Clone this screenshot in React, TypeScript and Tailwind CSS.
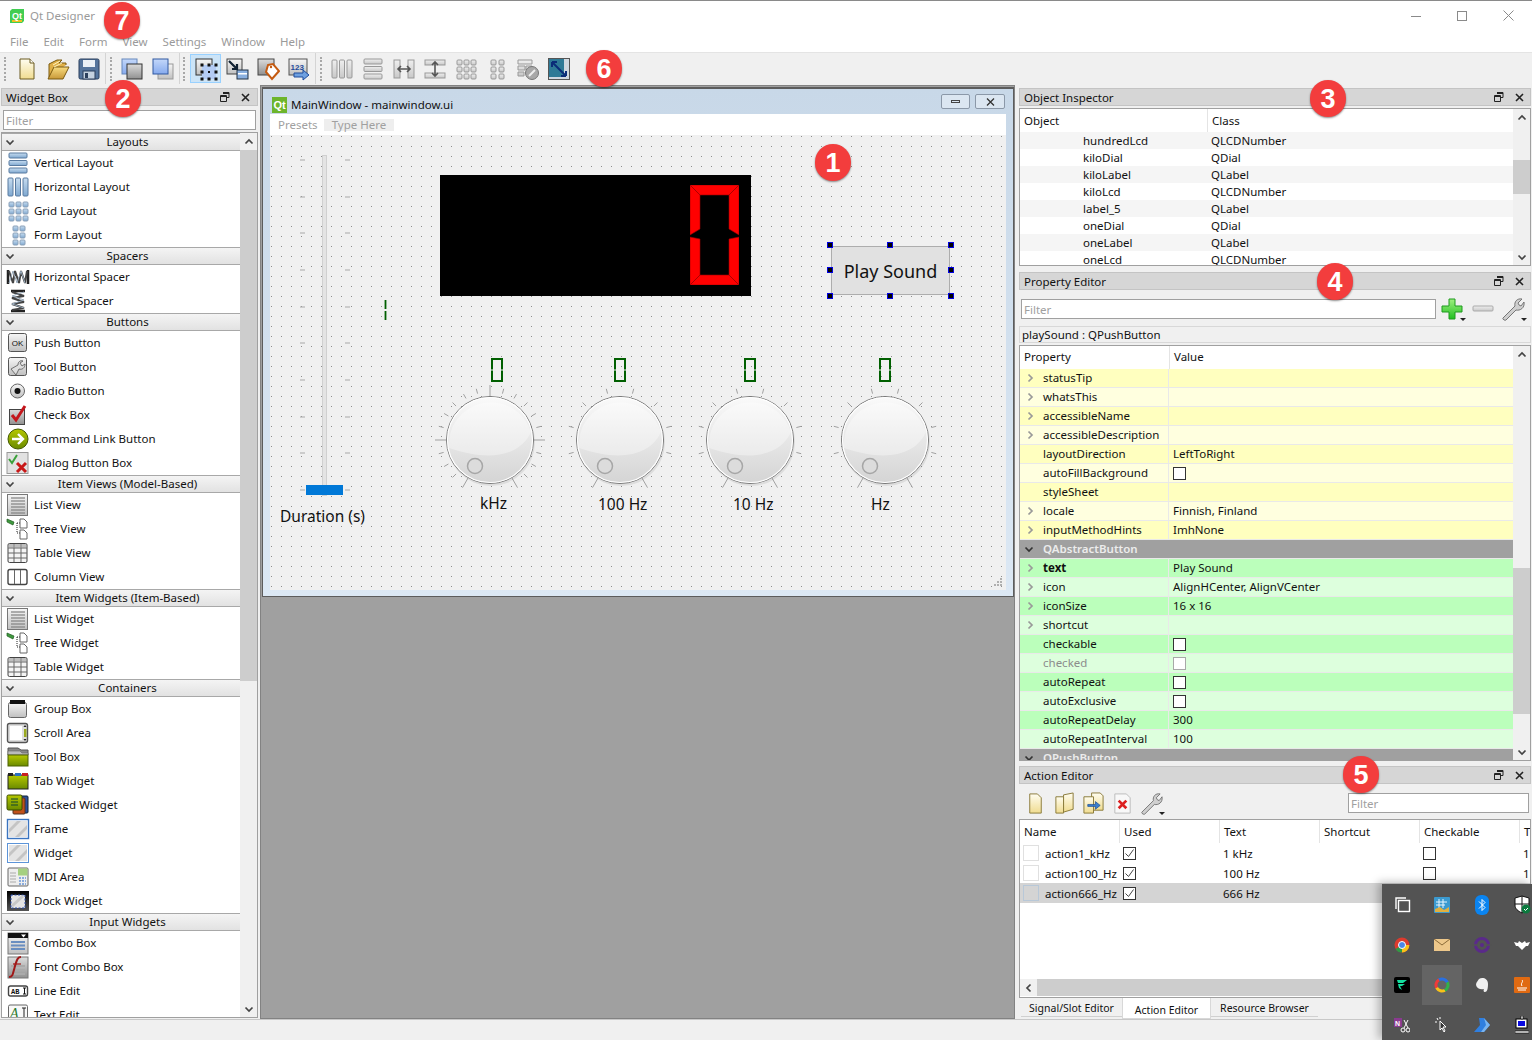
import React from "react";

type Ch = { children: React.ReactNode };

const Ico = ({ children, size = 24 }: Ch & { size?: number }) => (
  <svg width={size} height={size} viewBox="0 0 24 24" className="shrink-0">
    {children}
  </svg>
);

const bars3 = (horizontal: boolean, fill: string, stroke: string) =>
  [2, 9.5, 17].map((p) =>
    horizontal ? (
      <rect key={p} x={3} y={p} width={18} height={5} rx={1} fill={fill} stroke={stroke} />
    ) : (
      <rect key={p} x={p} y={3} width={5} height={18} rx={1} fill={fill} stroke={stroke} />
    )
  );

const cells = (xs: number[], ys: number[], fill: string, stroke: string) =>
  xs.flatMap((x) =>
    ys.map((y) => <rect key={`${x}-${y}`} x={x} y={y} width={5} height={5} rx={1} fill={fill} stroke={stroke} />)
  );

const hatch = (
  <>
    <rect x={3} y={4} width={18} height={16} fill="#e4e4e4" />
    <path d="M3 12l8-8h4L3 16zM9 20L21 8v4l-8 8z" fill="#c4c4c4" />
  </>
);

const treeIcon = (
  <>
    <path d="M1 2l7 3-1 3-6-3z" fill="#3f9a3f" stroke="#1f5a1f" strokeWidth=".7" />
    <path d="M11 6h3M11 6v10h3" stroke="#222" strokeWidth="1" strokeDasharray="1 1" fill="none" />
    <path d="M14 2h4l3 3v6h-7zM14 13h4l3 3v6h-7z" fill="#fff" stroke="#666" />
  </>
);

const listIcon = (
  <>
    <rect x={1.5} y={1.5} width={20} height={21} fill="url(#gGrey)" stroke="#777" />
    {[5, 8, 11, 14, 17, 20].map((y) => (
      <path key={y} d={`M5 ${y}h14`} stroke="#888" strokeWidth="1.3" />
    ))}
  </>
);

const tableIcon = (
  <>
    <rect x={2} y={2.5} width={19} height={19} rx={1.5} fill="#f4f4f4" stroke="#444" />
    <path d="M2 7h19M2 12h19M2 17h19M8 3v18M15 3v18" stroke="#666" />
    <rect x={2.5} y={3} width={18} height={4} fill="#999" opacity=".6" />
  </>
);

const wrench = (
  <path d="M2 21L14 9c-1-4 2-8 7-7l-4 4 1 2 2 1 3-4c1 6-4 9-8 8L5 23c-1 1-4-1-3-2z" fill="#cfcfcf" stroke="#6a6a6a" strokeWidth=".9" />
);

const page = <path d="M6 2h8l4 4v16H6z" fill="url(#gCream)" stroke="#8a7a3a" />;

const icons: Record<string, React.ReactNode> = {
  vlayout: bars3(true, "url(#gBlue)", "#587aa0"),
  hlayout: bars3(false, "url(#gBlue)", "#587aa0"),
  grid: cells([3, 10, 17], [3, 10, 17], "url(#gBlue)", "#8aa0b8"),
  form: cells([7, 14], [3, 10, 17], "url(#gBlue)", "#8aa0b8"),
  hspacer: (
    <>
      <path d="M2 5v14M22 5v14" stroke="#222" strokeWidth="2.5" />
      <path d="M3 6l4 12 2-12 4 12 2-12 4 12 2-12" stroke="#444" strokeWidth="2" fill="none" />
      <path d="M3 18l4-12 4 12 4-12 4 12" stroke="#9ab" strokeWidth="1" fill="none" />
    </>
  ),
  vspacer: (
    <>
      <path d="M5 2h14M5 22h14" stroke="#222" strokeWidth="2.5" />
      <path d="M6 3l12 4-12 2 12 4-12 2 12 4-12 2" stroke="#444" strokeWidth="2" fill="none" />
      <path d="M18 3L6 7l12 4-12 4 12 4" stroke="#9ab" strokeWidth="1" fill="none" />
    </>
  ),
  ok: (
    <>
      <rect x={2.5} y={2.5} width={18} height={18} rx={2} fill="url(#gGrey)" stroke="#555" />
      <text x={11.5} y={14.5} fontSize="8" textAnchor="middle" fontFamily="Liberation Sans" fill="#111">
        OK
      </text>
    </>
  ),
  tool: (
    <>
      <rect x={2.5} y={2.5} width={18} height={18} rx={2} fill="url(#gGrey)" stroke="#555" />
      <path d="M5 14l7-4c0-3 2-5 5-4l-3 2 2 3 3-2c0 4-3 6-6 5l-3 6z" fill="#ddd" stroke="#555" strokeWidth=".8" />
    </>
  ),
  radio: (
    <>
      <circle cx={11.5} cy={12} r={7} fill="url(#gGrey)" stroke="#666" />
      <circle cx={11.5} cy={12} r={3} fill="#111" />
    </>
  ),
  check: (
    <>
      <rect x={3.5} y={6.5} width={15} height={15} fill="url(#gDark)" stroke="#444" />
      <path d="M6 12l4 5 9-14" stroke="#c4161c" strokeWidth="3" fill="none" />
    </>
  ),
  cmdlink: (
    <>
      <circle cx={12} cy={12} r={10} fill="url(#gOlive)" stroke="#445a00" />
      <path d="M6 12h10M12 7l5 5-5 5" stroke="#fff" strokeWidth="2.4" fill="none" />
    </>
  ),
  dialogbox: (
    <>
      <rect x={1} y={1.5} width={21} height={21} fill="#e2e2e2" stroke="#999" />
      <path d="M3 8l3 4 5-8" stroke="#3aa03a" strokeWidth="2" fill="none" />
      <path d="M11 12l9 9M20 12l-9 9" stroke="#c81818" strokeWidth="3" />
    </>
  ),
  list: listIcon,
  tree: treeIcon,
  table: tableIcon,
  column: (
    <>
      <rect x={2} y={4.5} width={19} height={15} rx={2} fill="#fff" stroke="#444" strokeWidth="1.4" />
      <path d="M8.5 5v14M14.5 5v14" stroke="#666" />
    </>
  ),
  group: (
    <>
      <rect x={2.5} y={5.5} width={18} height={15} rx={2} fill="url(#gGrey)" stroke="#666" />
      <rect x={4} y={3} width={15} height={4} fill="#111" />
    </>
  ),
  scroll: (
    <>
      <rect x={1.5} y={2.5} width={20} height={19} rx={2} fill="#ddd" stroke="#555" strokeWidth="1.4" />
      <rect x={4} y={5} width={12} height={14} fill="#fff" />
      <rect x={18} y={8} width={2.5} height={8} fill="#9aaa20" />
      <path d="M19 4l-1.5 2h3zM19 20l-1.5-2h3z" fill="#222" />
    </>
  ),
  toolbox: (
    <>
      <path d="M2 3h10l3 2h7v5H2z" fill="#888" stroke="#555" />
      <path d="M2 6h12l2 2h6v2H2z" fill="#bbb" stroke="#666" strokeWidth=".6" />
      <rect x={2} y={10} width={20} height={11} fill="url(#gOlive)" stroke="#4c6000" />
    </>
  ),
  tab: (
    <>
      <rect x={2} y={6} width={20} height={14} fill="url(#gOlive)" stroke="#222" />
      <rect x={2} y={4} width={5} height={3} fill="#222" />
      <rect x={9} y={4} width={6} height={3} fill="#2a6fc0" />
      <rect x={16} y={4} width={6} height={3} fill="#c82020" />
    </>
  ),
  stacked: (
    <>
      <rect x={12} y={3} width={10} height={17} rx={1} fill="#2a50a0" stroke="#123" />
      <rect x={7} y={5} width={12} height={16} rx={1} fill="#c0501a" stroke="#532" />
      <rect x={1} y={2} width={15} height={15} rx={1.5} fill="url(#gOlive)" stroke="#3a4a00" />
      <path d="M5 6h7M5 9h7M5 12h7" stroke="#143" strokeWidth="1.2" />
    </>
  ),
  frame: (
    <>
      {hatch}
      <rect x={1.5} y={2.5} width={21} height={19} fill="none" stroke="#3a74c0" strokeWidth="1.4" />
    </>
  ),
  widget: (
    <>
      {hatch}
      <rect x={1.5} y={2.5} width={21} height={19} fill="none" stroke="#5c94d8" />
    </>
  ),
  mdi: (
    <>
      <rect x={2} y={3} width={20} height={18} rx={1} fill="#eee" stroke="#666" />
      <rect x={12} y={3.5} width={9.5} height={7} fill="#a5d080" />
      <path d="M4 8h6M4 11h6M4 14h6M4 17h6" stroke="#aaa" />
      <path d="M13 13h7M13 16h7M13 19h7" stroke="#6a96d8" strokeWidth="1.5" strokeDasharray="2 1" />
    </>
  ),
  dock: (
    <>
      <rect x={1} y={2} width={22} height={20} fill="url(#gBlack)" />
      <rect x={5} y={6} width={14} height={13} fill="#e4e4e4" stroke="#2a4fb0" strokeDasharray="2 1.5" />
      <path d="M6 17L17 7" stroke="#c8c8c8" strokeWidth="3" />
    </>
  ),
  combo: (
    <>
      <rect x={2} y={2} width={20} height={21} fill="url(#gGrey)" stroke="#777" />
      <rect x={2} y={2} width={20} height={5} fill="#111" />
      <path d="M15 3.5h5L17.5 6.5z" fill="#fff" />
      <path d="M5 11h14M5 14.5h14M5 18h14" stroke="#6a8ec0" strokeWidth="2.2" />
    </>
  ),
  fontcombo: (
    <>
      <rect x={2} y={2} width={20} height={21} fill="url(#gDark)" stroke="#777" />
      <path d="M5 11h14M5 15h14M5 19h14" stroke="#aaa" strokeWidth="2" />
      <path d="M3 22c4 0 4-4 6-11s3-9 6-9" stroke="#a01818" strokeWidth="2" fill="none" />
      <path d="M7 9h8" stroke="#a01818" strokeWidth="1.2" />
    </>
  ),
  lineedit: (
    <>
      <rect x={2.5} y={7} width={19} height={10} rx={2} fill="#fff" stroke="#444" strokeWidth="1.4" />
      <text x={5} y={14.5} fontSize="7" fontFamily="Liberation Mono" fontWeight="700" fill="#111">
        AB
      </text>
      <path d="M17 9h3M17 15h3M18.5 9v6" stroke="#111" />
    </>
  ),
  textedit: (
    <>
      <rect x={2.5} y={2} width={19} height={21} rx={1.5} fill="#f8f8f8" stroke="#666" />
      <text x={4} y={15} fontSize="14" fontStyle="italic" fontFamily="Liberation Serif" fill="#2d7a2d">
        A
      </text>
      <path d="M16 5h4M16 19h4M18 5v14" stroke="#222" />
    </>
  ),
  newDoc: (
    <>
      <path d="M5 2h10l4 4v16H5z" fill="url(#gCream)" stroke="#6b5a20" />
      <path d="M15 2v4h4" fill="#fff" stroke="#6b5a20" />
    </>
  ),
  open: (
    <>
      <path d="M3 20V7l8-4h5l-3 3h7v2" fill="#e0b048" stroke="#7a5a10" />
      <path d="M2 22l6-12h15l-6 12z" fill="url(#gFolder)" stroke="#7a5a10" />
      <path d="M7 8l7-4M8 10l8-4" stroke="#fff3c0" />
    </>
  ),
  save: (
    <>
      <rect x={2} y={2} width={20} height={20} rx={1.5} fill="#54749c" stroke="#2b3f5c" />
      <rect x={6} y={3} width={12} height={7} fill="#eaf0f6" />
      <rect x={6} y={14} width={12} height={8} fill="#c5d2e0" stroke="#2b3f5c" />
      <rect x={8} y={16} width={3} height={5} fill="#2b3f5c" />
    </>
  ),
  toBack: (
    <>
      <rect x={2} y={2} width={15} height={15} fill="url(#gBlue2)" stroke="#6688bb" />
      <rect x={7} y={7} width={15} height={15} fill="url(#gDark)" stroke="#333" />
    </>
  ),
  toFront: (
    <>
      <rect x={7} y={7} width={15} height={15} fill="url(#gGrey)" stroke="#999" />
      <rect x={2} y={2} width={15} height={15} fill="url(#gBlue2)" stroke="#3058a0" />
    </>
  ),
  editWidgets: (
    <>
      <rect x={2} y={2} width={16} height={16} fill="url(#gGrey)" stroke="#333" />
      <rect x={8} y={8} width={14} height={14} fill="#b4ccf4" />
      {[[8, 8], [15, 8], [22, 8], [8, 15], [22, 15], [8, 22], [15, 22], [22, 22]].map(([x, y]) => (
        <rect key={`${x}${y}`} x={x - 1.5} y={y - 1.5} width={3} height={3} fill="#111" />
      ))}
      <rect x={14} y={14} width={2} height={2} fill="#111" />
    </>
  ),
  signals: (
    <>
      <rect x={2} y={2} width={15} height={15} fill="url(#gGrey)" stroke="#444" />
      <rect x={12} y={13} width={11} height={9} fill="#8ab0e0" stroke="#234" />
      <rect x={13} y={16} width={9} height={1.5} fill="#fff" />
      <path d="M4 4l7 7M7 12h5V7" stroke="#123" strokeWidth="2.2" fill="none" />
    </>
  ),
  buddy: (
    <>
      <rect x={2} y={2} width={16} height={16} fill="url(#gDark)" stroke="#444" />
      <path d="M12 8l5-1 6 7-7 8-6-7z" fill="#fff" stroke="#c45a10" strokeWidth="2" />
      <circle cx={15} cy={10} r={1.2} fill="#c45a10" />
    </>
  ),
  taborder: (
    <>
      <rect x={2} y={2} width={18} height={16} fill="url(#gGrey)" stroke="#555" />
      <text x={3.5} y={13} fontSize="8" fontFamily="Liberation Sans" fontWeight="700" fill="#1f4c9c">
        123
      </text>
      <path d="M7 16h9v-3l6 5-6 5v-3H7z" fill="#6ea0e0" stroke="#1f4c9c" />
    </>
  ),
  gH: bars3(false, "url(#gLight)", "#999"),
  gV: bars3(true, "url(#gLight)", "#999"),
  gSplitH: (
    <>
      <rect x={2} y={3} width={6} height={18} fill="url(#gLight)" stroke="#999" />
      <rect x={16} y={3} width={6} height={18} fill="url(#gLight)" stroke="#999" />
      <path d="M6 12h12M9 9l-3 3 3 3M15 9l3 3-3 3" stroke="#555" strokeWidth="1.6" fill="none" />
    </>
  ),
  gSplitV: (
    <>
      <rect x={2} y={3} width={20} height={5} fill="url(#gLight)" stroke="#999" />
      <rect x={2} y={16} width={20} height={5} fill="url(#gLight)" stroke="#999" />
      <path d="M12 5v14M9 8l3-3 3 3M9 16l3 3 3-3" stroke="#555" strokeWidth="1.6" fill="none" />
    </>
  ),
  gGrid: cells([3, 10, 17], [3, 10, 17], "url(#gLight)", "#999"),
  gForm: cells([6, 14], [3, 10, 17], "url(#gLight)", "#999"),
  gBreak: (
    <>
      <path d="M2 3h14v4H2zM2 9h7v4H2zM10 9h6v4h-6zM2 15h6v4H2z" fill="url(#gLight)" stroke="#999" />
      <circle cx={16} cy={16} r={6.5} fill="#a8a8a8" stroke="#777" />
      <path d="M13 19l6-6" stroke="#eee" strokeWidth="2" />
    </>
  ),
  gAdjust: (
    <>
      <rect x={1.5} y={1.5} width={21} height={21} fill="#d0d8e0" stroke="#555" />
      <rect x={2} y={2} width={15} height={18} fill="#2f7a96" />
      <path d="M5 5l14 14M5 5h5M5 5v5M19 19h-5M19 19v-5" stroke="#0b2d78" strokeWidth="2" fill="none" />
    </>
  ),
  aNew: page,
  aFolder: (
    <>
      <path d="M11 3l10-2v17l-10 3z" fill="url(#gCream)" stroke="#8a7a3a" />
      <path d="M3 5h8v17H3z" fill="url(#gCream)" stroke="#8a7a3a" />
    </>
  ),
  aCopy: (
    <>
      <path d="M10 1h9l3 3v15H10z" fill="url(#gCream)" stroke="#8a7a3a" />
      <path d="M2 5h10v17H2z" fill="url(#gCream)" stroke="#8a7a3a" />
      <path d="M6 13h8v-3l5 4-5 4v-3H6z" fill="#3a80d0" stroke="#1a4a90" strokeWidth=".7" />
    </>
  ),
  aDelete: (
    <>
      <path d="M4 2h12l4 4v16H4z" fill="#f8f8f8" stroke="#bbb" />
      <path d="M8 9l8 8M16 9l-8 8" stroke="#dc2020" strokeWidth="2.8" />
    </>
  ),
  wrench,
  plus: <path d="M9 2h6v7h7v6h-7v7H9v-7H2V9h7z" fill="url(#gGreen)" stroke="#1f9a1f" />,
  minus: <rect x={2} y={9} width={20} height={5} rx={1} fill="url(#gLight)" stroke="#aaa" />,
};

const widgetSections: { title: string; items: [string, string][] }[] = [
  {
    title: "Layouts",
    items: [["vlayout", "Vertical Layout"], ["hlayout", "Horizontal Layout"], ["grid", "Grid Layout"], ["form", "Form Layout"]],
  },
  { title: "Spacers", items: [["hspacer", "Horizontal Spacer"], ["vspacer", "Vertical Spacer"]] },
  {
    title: "Buttons",
    items: [
      ["ok", "Push Button"],
      ["tool", "Tool Button"],
      ["radio", "Radio Button"],
      ["check", "Check Box"],
      ["cmdlink", "Command Link Button"],
      ["dialogbox", "Dialog Button Box"],
    ],
  },
  {
    title: "Item Views (Model-Based)",
    items: [["list", "List View"], ["tree", "Tree View"], ["table", "Table View"], ["column", "Column View"]],
  },
  {
    title: "Item Widgets (Item-Based)",
    items: [["list", "List Widget"], ["tree", "Tree Widget"], ["table", "Table Widget"]],
  },
  {
    title: "Containers",
    items: [
      ["group", "Group Box"],
      ["scroll", "Scroll Area"],
      ["toolbox", "Tool Box"],
      ["tab", "Tab Widget"],
      ["stacked", "Stacked Widget"],
      ["frame", "Frame"],
      ["widget", "Widget"],
      ["mdi", "MDI Area"],
      ["dock", "Dock Widget"],
    ],
  },
  {
    title: "Input Widgets",
    items: [["combo", "Combo Box"], ["fontcombo", "Font Combo Box"], ["lineedit", "Line Edit"], ["textedit", "Text Edit"]],
  },
];

const Chevron = ({ dir = "down", color = "#444" }: { dir?: "down" | "up" | "right" | "left"; color?: string }) => {
  const d = {
    down: "M1.5 3.5L5 7l3.5-3.5",
    up: "M1.5 6.5L5 3l3.5 3.5",
    right: "M3.5 1.5L7 5l-3.5 3.5",
    left: "M6.5 1.5L3 5l3.5 3.5",
  }[dir];
  return (
    <svg width="10" height="10" viewBox="0 0 10 10" className="shrink-0">
      <path d={d} fill="none" stroke={color} strokeWidth="1.7" />
    </svg>
  );
};

const Badge = ({ n, className }: { n: number; className: string }) => (
  <div
    className={`absolute z-10 w-[36px] h-[37px] rounded-full bg-[#f33d3d] shadow-[0_1px_2px_rgba(0,0,0,0.45)] text-white font-['Liberation_Sans',sans-serif] font-bold text-[27px] flex items-center justify-center ${className}`}
  >
    {n}
  </div>
);

function DockTitle({ title, pr = "pr-[6px]" }: { title: string; pr?: string }) {
  return (
    <div className={`h-[18px] shrink-0 bg-[#d6d6d6] border border-[#c4c4c4] flex items-center pl-[4px] ${pr}`}>
      <span className="flex-1 text-[#111] pt-[2px]">{title}</span>
      <svg width="10" height="10" viewBox="0 0 10 10" className="mr-[11px]">
        <path d="M3 .5h6v5H7M.5 3.5h6v6h-6z" fill="none" stroke="#222" />
        <path d="M3 1.5h6M.5 4.5h6" stroke="#222" />
      </svg>
      <svg width="9" height="9" viewBox="0 0 9 9">
        <path d="M1 1l7 7M8 1L1 8" stroke="#222" strokeWidth="1.6" />
      </svg>
    </div>
  );
}

function FilterBox({ className = "" }: { className?: string }) {
  return (
    <div className={`h-[20px] bg-white border border-[#a0a0a0] text-[#a0a0a0] pl-[2px] flex items-center ${className}`}>
      <span className="pt-[2px]">Filter</span>
    </div>
  );
}

function VScroll({ thumbTop, thumbHeight }: { thumbTop: string; thumbHeight: string }) {
  return (
    <div className="w-[17px] shrink-0 bg-[#f0f0f0] flex flex-col items-center relative">
      <div className="h-[17px] flex items-center justify-center">
        <Chevron dir="up" />
      </div>
      <div className={`absolute left-0 right-0 bg-[#cdcdcd] ${thumbTop} ${thumbHeight}`} />
      <div className="mt-auto h-[17px] flex items-center justify-center">
        <Chevron />
      </div>
    </div>
  );
}

function WidgetBox() {
  return (
    <aside className="w-[257px] ml-[1px] pt-[3px] flex flex-col shrink-0">
      <DockTitle title="Widget Box" pr="pr-[7px]" />
      <FilterBox className="mx-[2px] mt-[4px]" />
      <div className="mt-[2px] h-[886px] border border-[#a0a0a0] flex overflow-hidden bg-white">
        <div className="w-[238px] shrink-0 overflow-hidden">
          {widgetSections.map((s) => (
            <section key={s.title}>
              <div className="h-[18px] flex items-center bg-gradient-to-b from-[#f4f4f4] to-[#e2e2e2] border-t border-b border-[#a8a8a8] pl-[3px]">
                <Chevron />
                <span className="flex-1 text-center text-[#111]">{s.title}</span>
              </div>
              {s.items.map(([icon, label]) => (
                <div key={label} className="h-[24px] flex items-center pl-[4px] gap-[4px]">
                  <Ico>{icons[icon]}</Ico>
                  <span className="text-[#111]">{label}</span>
                </div>
              ))}
            </section>
          ))}
        </div>
        <VScroll thumbTop="top-[17px]" thumbHeight="h-[531px]" />
      </div>
    </aside>
  );
}

function ToolHandle({ ml, mr }: { ml: string; mr: string }) {
  return <div className={`w-[2px] h-[24px] border-l-2 border-dotted border-[#a8a8a8] ${ml} ${mr}`} />;
}

function ToolBtn({ name, active }: { name: string; active?: boolean }) {
  return (
    <div
      className={`w-[31px] h-[29px] flex items-center justify-center border ${
        active ? "bg-[#cce4f7] border-[#99d1ff]" : "border-transparent"
      }`}
    >
      <Ico size={24}>{icons[name]}</Ico>
    </div>
  );
}

const ToolSep = () => <div className="w-px h-[31px] bg-[#d4d4d4] ml-[1px]" />;

function Toolbar() {
  return (
    <div className="h-[33px] shrink-0 flex items-center bg-[#f0f0f0] border-t border-[#e4e4e4] pb-[1px]">
      <ToolHandle ml="ml-[4px]" mr="mr-[5px]" />
      {["newDoc", "open", "save"].map((n) => (
        <ToolBtn key={n} name={n} />
      ))}
      <ToolSep />
      <ToolHandle ml="ml-[4px]" mr="mr-[4px]" />
      {["toBack", "toFront"].map((n) => (
        <ToolBtn key={n} name={n} />
      ))}
      <ToolSep />
      <ToolHandle ml="ml-[3px]" mr="mr-[5px]" />
      <ToolBtn name="editWidgets" active />
      {["signals", "buddy", "taborder"].map((n) => (
        <ToolBtn key={n} name={n} />
      ))}
      <ToolSep />
      <ToolHandle ml="ml-[4px]" mr="mr-[4px]" />
      {["gH", "gV", "gSplitH", "gSplitV", "gGrid", "gForm", "gBreak", "gAdjust"].map((n) => (
        <ToolBtn key={n} name={n} />
      ))}
    </div>
  );
}

const QtLogo = ({ size = 14 }: { size?: number }) => (
  <svg width={size} height={size} viewBox="0 0 14 14" className="shrink-0">
    <path d="M2 0h12v12l-2 2H0V2z" fill="#41cd52" />
    <rect x="2" y="11" width="10" height="2" fill="#f0c020" />
    <text x="7" y="9.5" fontSize="9" fontWeight="700" textAnchor="middle" fill="#fff" fontFamily="Liberation Sans">
      Qt
    </text>
  </svg>
);

function SmallZero({ className }: { className: string }) {
  return (
    <svg width="12" height="24" viewBox="0 0 12 24" className={`absolute ${className}`}>
      <path d="M1 1h10v22H1z" fill="none" stroke="#005f00" strokeWidth="2" />
      <path d="M0 12h2.2M9.8 12H12" stroke="#f0f0f0" strokeWidth="1.2" />
    </svg>
  );
}

function Dial({ left, ticks }: { left: string; ticks: { a: number; long?: boolean }[] }) {
  return (
    <svg width="124" height="124" viewBox="-62 -62 124 124" className={`absolute top-[243px] ${left}`}>
      {ticks.map(({ a, long }) => {
        const r = (a * Math.PI) / 180;
        const r1 = long ? 44 : 48;
        const r2 = long ? 55 : 53;
        return (
          <line
            key={a}
            x1={Math.sin(r) * r1}
            y1={-Math.cos(r) * r1}
            x2={Math.sin(r) * r2}
            y2={-Math.cos(r) * r2}
            stroke="#a0a0a0"
          />
        );
      })}
      <circle cx={1} cy={2} r={44} fill="#000" opacity=".08" />
      <circle r={43.5} fill="url(#gDial)" stroke="#777" />
      <circle r={42.5} fill="none" stroke="#fff" strokeWidth="1.2" />
      <path d="M-41 8A42 42 0 0 1 41-8C30 16 0 22-41 8z" fill="#fff" opacity=".35" />
      <circle cx={-15} cy={26} r={7.5} fill="#dcdcdc" stroke="#a6a6a6" strokeWidth="1.5" />
    </svg>
  );
}

const fineTicks = Array.from({ length: 21 }, (_, i) => {
  const a = -150 + i * 15;
  return { a, long: a === 0 || Math.abs(a) === 90 || Math.abs(a) === 150 };
});
const coarseTicks = [-150, -105, -75, -45, -15, 15, 45, 75, 105, 150].map((a) => ({ a, long: Math.abs(a) === 150 }));

const sliderTicks = [25, 62, 98, 135, 172, 208, 245, 282, 318, 355];

function FormCanvas() {
  return (
    <div className="relative flex-1 bg-[#f0f0f0] bg-[radial-gradient(circle_at_1.5px_1.5px,#8e8e8e_0.75px,transparent_0.8px)] bg-[size:10px_10px] overflow-hidden">
      {/* slider */}
      <svg width="60" height="365" viewBox="0 0 60 365" className="absolute left-[28px] top-0">
        <rect x={24.5} y={20.5} width={4} height={340} fill="#e4e4e4" stroke="#d0d0d0" />
        {sliderTicks.map((y) => (
          <path key={y} d={`M2 ${y}h5M47 ${y}h5`} stroke="#a8a8a8" />
        ))}
        <rect x={8} y={350} width={37} height={10} fill="#0078d7" />
      </svg>
      <span className="absolute left-[10px] top-[370px] text-[15.5px] leading-[22px] text-[#111]">Duration (s)</span>

      <svg width="5" height="20" viewBox="0 0 5 20" className="absolute left-[113px] top-[165px]">
        <path d="M2.5 0v9M2.5 11v9" stroke="#005f00" strokeWidth="1.8" />
      </svg>

      <div className="absolute left-[170px] top-[40px] w-[311px] h-[121px] bg-black">
        <svg width="49" height="100" viewBox="0 0 49 100" className="absolute left-[250px] top-[10px]">
          <g fill="#f00" stroke="#900" strokeWidth=".6">
            <path d="M0 0l10 10v34L0 50z" />
            <path d="M49 0L39 10v34l10 6z" />
            <path d="M0 52l10 2v36L0 100z" />
            <path d="M49 52l-10 2v36l10 10z" />
            <path d="M0 0h49L39 10H10z" />
            <path d="M0 100h49L39 90H10z" />
          </g>
        </svg>
      </div>

      <SmallZero className="left-[221px] top-[223px]" />
      <SmallZero className="left-[344px] top-[223px]" />
      <SmallZero className="left-[474px] top-[223px]" />
      <SmallZero className="left-[609px] top-[223px]" />

      <Dial left="left-[158px]" ticks={fineTicks} />
      <Dial left="left-[288px]" ticks={coarseTicks} />
      <Dial left="left-[418px]" ticks={coarseTicks} />
      <Dial left="left-[553px]" ticks={coarseTicks} />

      <span className="absolute left-[210px] top-[357px] text-[15.5px] leading-[22px] text-[#111]">kHz</span>
      <span className="absolute left-[328px] top-[358px] text-[15.5px] leading-[22px] text-[#111]">100 Hz</span>
      <span className="absolute left-[463px] top-[358px] text-[15.5px] leading-[22px] text-[#111]">10 Hz</span>
      <span className="absolute left-[601px] top-[358px] text-[15.5px] leading-[22px] text-[#111]">Hz</span>

      <div className="absolute left-[561px] top-[111px] w-[119px] h-[49px] bg-[#e1e1e1] border border-[#adadad] flex items-center justify-center text-[18px] text-[#111]">
        Play Sound
      </div>
      {[
        "left-[557px] top-[107px]",
        "left-[617px] top-[107px]",
        "left-[678px] top-[107px]",
        "left-[557px] top-[132px]",
        "left-[678px] top-[132px]",
        "left-[557px] top-[158px]",
        "left-[617px] top-[158px]",
        "left-[678px] top-[158px]",
      ].map((c) => (
        <div key={c} className={`absolute w-[6px] h-[6px] bg-black border border-[#0000e0] ${c}`} />
      ))}

      <svg width="10" height="10" viewBox="0 0 10 10" className="absolute right-[3px] bottom-[3px]" fill="#b0b0b0">
        <rect x="7" y="1" width="2" height="2" />
        <rect x="4" y="4" width="2" height="2" />
        <rect x="7" y="4" width="2" height="2" />
        <rect x="1" y="7" width="2" height="2" />
        <rect x="4" y="7" width="2" height="2" />
        <rect x="7" y="7" width="2" height="2" />
      </svg>
    </div>
  );
}

function FormWindow() {
  return (
    <div className="mt-[1px] ml-[1px] w-[752px] h-[510px] border border-[#5c5c5c] border-t-2 bg-gradient-to-b from-[#c8d8e8] to-[#dce8f4] px-[7px] pb-[6px] flex flex-col">
      <div className="h-[25px] shrink-0 pt-[6px] flex items-center">
        <span className="ml-[2px] mr-[4px] flex">
          <svg width="15" height="16" viewBox="0 0 15 16">
            <rect width="15" height="16" fill="#6db52c" />
            <text x="7.5" y="12" fontSize="11" fontWeight="700" textAnchor="middle" fill="#fff" fontFamily="Liberation Sans">
              Qt
            </text>
          </svg>
        </span>
        <span className="flex-1 text-[#111] pt-[1px]">MainWindow - mainwindow.ui</span>
        <div className="w-[29px] h-[15px] mb-[6px] border border-[#8b98a8] rounded-[2px] bg-[#dbe6f1] mr-[5px] flex items-center justify-center">
          <div className="w-[9px] h-[3px] border border-[#444]" />
        </div>
        <div className="w-[30px] h-[15px] mb-[6px] border border-[#8b98a8] rounded-[2px] bg-[#dbe6f1] mr-px flex items-center justify-center">
          <svg width="9" height="8" viewBox="0 0 9 8">
            <path d="M1 .5l7 7M8 .5l-7 7" stroke="#333" strokeWidth="1.3" />
          </svg>
        </div>
      </div>
      <div className="h-[21px] shrink-0 bg-white flex items-center pl-[8px] text-[#a0a0a0]">
        <span className="mr-[6px]">Presets</span>
        <span className="h-[12px] mt-[1px] px-[8px] flex items-center bg-[#eeeeee]">Type Here</span>
      </div>
      <FormCanvas />
    </div>
  );
}

const objectRows = [
  ["hundredLcd", "QLCDNumber"],
  ["kiloDial", "QDial"],
  ["kiloLabel", "QLabel"],
  ["kiloLcd", "QLCDNumber"],
  ["label_5", "QLabel"],
  ["oneDial", "QDial"],
  ["oneLabel", "QLabel"],
  ["oneLcd", "QLCDNumber"],
];

function ObjectInspector() {
  return (
    <div className="mt-[3px]">
      <DockTitle title="Object Inspector" />
      <div className="mt-[2px] h-[158px] border border-[#a0a0a0] flex bg-white overflow-hidden">
        <div className="flex-1">
          <div className="h-[23px] flex items-center text-[#111]">
            <span className="w-[188px] pl-[4px] h-full flex items-center border-r border-[#e4e4e4]">Object</span>
            <span className="pl-[4px]">Class</span>
          </div>
          {objectRows.map(([o, c], i) => (
            <div key={o} className={`h-[17px] flex items-center text-[#111] ${i % 2 === 0 ? "bg-[#f5f5f5]" : "bg-white"}`}>
              <span className="w-[191px] pl-[63px]">{o}</span>
              <span>{c}</span>
            </div>
          ))}
        </div>
        <VScroll thumbTop="top-[51px]" thumbHeight="h-[34px]" />
      </div>
    </div>
  );
}

type Prop = { n: string; v?: string; arrow?: boolean; bold?: boolean; off?: boolean; box?: boolean };

const yellowProps: Prop[] = [
  { n: "statusTip", arrow: true },
  { n: "whatsThis", arrow: true },
  { n: "accessibleName", arrow: true },
  { n: "accessibleDescription", arrow: true },
  { n: "layoutDirection", v: "LeftToRight" },
  { n: "autoFillBackground", box: true },
  { n: "styleSheet" },
  { n: "locale", v: "Finnish, Finland", arrow: true },
  { n: "inputMethodHints", v: "ImhNone", arrow: true },
];

const greenProps: Prop[] = [
  { n: "text", v: "Play Sound", arrow: true, bold: true },
  { n: "icon", v: "AlignHCenter, AlignVCenter", arrow: true },
  { n: "iconSize", v: "16 x 16", arrow: true },
  { n: "shortcut", arrow: true },
  { n: "checkable", box: true },
  { n: "checked", box: true, off: true },
  { n: "autoRepeat", box: true },
  { n: "autoExclusive", box: true },
  { n: "autoRepeatDelay", v: "300" },
  { n: "autoRepeatInterval", v: "100" },
];

function PropRow({ p, bg }: { p: Prop; bg: string }) {
  return (
    <div className={`h-[19px] flex items-center border-b border-[#e9e9e9] text-[#111] ${bg}`}>
      <div className="w-[149px] h-full flex items-center border-r border-[#e9e9e9] shrink-0">
        <span className="w-[23px] pl-[5px] shrink-0">{p.arrow && <Chevron dir="right" color="#999" />}</span>
        <span className={`${p.bold ? "font-bold" : ""} ${p.off ? "text-[#8c8c8c]" : ""}`}>{p.n}</span>
      </div>
      <span className="pl-[4px] flex items-center">
        {p.box ? (
          <span className={`w-[13px] h-[13px] border bg-white ${p.off ? "border-[#a8a8a8]" : "border-[#333]"}`} />
        ) : (
          p.v
        )}
      </span>
    </div>
  );
}

const PropSection = ({ title }: { title: string }) => (
  <div className="h-[19px] shrink-0 flex items-center bg-[#a0a0a0] border-b border-[#e9e9e9] pl-[4px]">
    <Chevron color="#333" />
    <span className="ml-[9px] text-[#ececec] font-semibold">{title}</span>
  </div>
);

function PropertyEditor() {
  return (
    <div className="mt-[6px]">
      <DockTitle title="Property Editor" />
      <div className="mt-[9px] h-[20px] flex items-center pl-[2px]">
        <FilterBox className="w-[415px] h-[20px]" />
        <span className="ml-[4px] w-[24px] relative">
          <Ico size={24}>{icons.plus}</Ico>
          <span className="absolute right-[-2px] bottom-0 border-x-[3px] border-t-[3px] border-x-transparent border-t-[#222]" />
        </span>
        <span className="ml-[7px] w-[24px]">
          <Ico size={24}>{icons.minus}</Ico>
        </span>
        <span className="ml-[6px] w-[24px] relative">
          <Ico size={24}>{icons.wrench}</Ico>
          <span className="absolute right-[-2px] bottom-0 border-x-[3px] border-t-[3px] border-x-transparent border-t-[#222]" />
        </span>
      </div>
      <div className="mt-[7px] h-[17px] border border-[#d8d8d8] pl-[2px] flex items-center text-[#111] overflow-hidden">
        playSound : QPushButton
      </div>
      <div className="mt-[2px] h-[416px] border border-[#a0a0a0] flex bg-white overflow-hidden">
        <div className="flex-1 overflow-hidden">
          <div className="h-[23px] flex items-center text-[#111]">
            <span className="w-[150px] pl-[4px] pb-[2px] h-full flex items-center border-r border-[#e4e4e4] shrink-0">Property</span>
            <span className="pl-[4px] pb-[2px]">Value</span>
          </div>
          {yellowProps.map((p, i) => (
            <PropRow key={p.n} p={p} bg={i % 2 === 0 ? "bg-[#ffffbf]" : "bg-[#ffffdf]"} />
          ))}
          <PropSection title="QAbstractButton" />
          {greenProps.map((p, i) => (
            <PropRow key={p.n} p={p} bg={i % 2 === 0 ? "bg-[#bbffbb]" : "bg-[#ddffdd]"} />
          ))}
          <PropSection title="QPushButton" />
        </div>
        <VScroll thumbTop="top-[222px]" thumbHeight="h-[146px]" />
      </div>
    </div>
  );
}

const actionRows = [
  { name: "action1_kHz", text: "1 kHz" },
  { name: "action100_Hz", text: "100 Hz" },
  { name: "action666_Hz", text: "666 Hz", selected: true },
];

const CheckBox = ({ on }: { on?: boolean }) => (
  <span className="w-[13px] h-[13px] border border-[#333] bg-white flex items-center justify-center shrink-0">
    {on && (
      <svg width="11" height="11" viewBox="0 0 11 11">
        <path d="M1.5 5.5l3 3 5-7" fill="none" stroke="#444" />
      </svg>
    )}
  </span>
);

function ActionEditor() {
  return (
    <div className="mt-[5px]">
      <DockTitle title="Action Editor" />
      <div className="h-[35px] flex items-center pl-[2px] pt-[3px]">
        {["aNew", "aFolder", "aCopy", "aDelete"].map((n) => (
          <span key={n} className="w-[29px] flex justify-center">
            <Ico size={23}>{icons[n]}</Ico>
          </span>
        ))}
        <span className="w-[29px] flex justify-center relative">
          <Ico size={23}>{icons.wrench}</Ico>
          <span className="absolute right-[1px] bottom-0 border-x-[3px] border-t-[3px] border-x-transparent border-t-[#222]" />
        </span>
        <FilterBox className="ml-auto w-[181px] mr-[2px]" />
      </div>
      <div className="h-[179px] border border-[#a0a0a0] bg-white flex flex-col overflow-hidden">
        <div className="h-[23px] shrink-0 flex items-center text-[#111]">
          {["Name", "Used", "Text", "Shortcut", "Checkable"].map((h) => (
            <span key={h} className="w-[100px] shrink-0 h-full pl-[4px] flex items-center border-r border-[#e4e4e4]">
              {h}
            </span>
          ))}
          <span className="pl-[4px] whitespace-nowrap">T</span>
        </div>
        {actionRows.map((r) => (
          <div key={r.name} className={`h-[20px] shrink-0 flex items-center text-[#111] ${r.selected ? "bg-[#d4d4d4]" : ""}`}>
            <span className="w-[100px] shrink-0 flex items-center pl-[3px] gap-[6px]">
              <span className={`w-[16px] h-[16px] border ${r.selected ? "border-[#b8c8d8]" : "border-[#e0e0e0]"} shrink-0`} />
              <span className="pt-[2px]">{r.name}</span>
            </span>
            <span className="w-[100px] shrink-0 pl-[3px]">
              <CheckBox on />
            </span>
            <span className="w-[200px] shrink-0 pl-[3px] pt-[2px]">{r.text}</span>
            <span className="w-[100px] shrink-0 pl-[3px]">{!r.selected && <CheckBox />}</span>
            <span className="pl-[3px] pt-[2px]">{!r.selected && "1"}</span>
          </div>
        ))}
        <div className="mt-auto mb-px h-[17px] shrink-0 bg-[#cdcdcd] flex items-center">
          <span className="w-[17px] h-full bg-[#f0f0f0] flex items-center justify-center">
            <Chevron dir="left" />
          </span>
        </div>
      </div>
      <div className="h-[20px] flex text-[#111] pl-[2px] text-[10.5px]">
        <span className="w-[101px] h-[19px] flex items-center justify-center border-b border-[#d0d0d0] pt-[2px]">Signal/Slot Editor</span>
        <span className="w-[89px] h-[21px] flex items-center justify-center bg-white border-x border-b border-[#d8d8d8] pt-[3px]">Action Editor</span>
        <span className="w-[107px] h-[19px] flex items-center justify-center border-b border-[#d0d0d0] pt-[2px]">Resource Browser</span>
      </div>
    </div>
  );
}

const tray: React.ReactNode[] = [
  <svg key="1" width="20" height="20" viewBox="0 0 20 20">
    <path d="M4 14V3h10" fill="none" stroke="#fff" strokeWidth="1.4" />
    <rect x="6.5" y="5.5" width="11" height="11" fill="none" stroke="#fff" strokeWidth="1.4" />
  </svg>,
  <svg key="2" width="18" height="18" viewBox="0 0 18 18">
    <rect width="16" height="16" x="1" y="1" rx="1" fill="#3b9ad0" />
    <path d="M3 6h11M3 9h9M6 3v9M10 3v9" stroke="#e8f6ff" />
    <path d="M2 13l5-2 4 3 5-3v5H2z" fill="#e0b040" />
  </svg>,
  <svg key="3" width="14" height="20" viewBox="0 0 14 20">
    <rect width="14" height="20" rx="6" fill="#0a84f0" />
    <path d="M4 6.5l6 6-3 3v-11l3 3-6 6" fill="none" stroke="#fff" />
  </svg>,
  <svg key="4" width="18" height="20" viewBox="0 0 18 20">
    <path d="M2 3l7-2 7 2v7c0 4-3 6-7 8-4-2-7-4-7-8z" fill="#fff" stroke="#111" />
    <path d="M9 1v17M2 9h14" stroke="#111" />
    <circle cx="13" cy="14" r="4.5" fill="#0b7a3e" />
    <path d="M11 14l1.5 1.5L15 13" stroke="#fff" fill="none" />
  </svg>,
  <svg key="5" width="16" height="16" viewBox="0 0 16 16">
    <circle cx="8" cy="8" r="7.5" fill="#dc3b2e" />
    <path d="M8 8L1.5 12A7.5 7.5 0 0 0 8 15.5z" fill="#2e9a46" />
    <path d="M8 8h7.3A7.5 7.5 0 0 1 8 15.5z" fill="#f8c218" />
    <circle cx="8" cy="8" r="3.5" fill="#4a86e8" stroke="#fff" />
  </svg>,
  <svg key="6" width="16" height="12" viewBox="0 0 16 12">
    <rect width="16" height="12" fill="#edc78a" />
    <path d="M0 0l8 6 8-6" fill="none" stroke="#8a6a38" />
  </svg>,
  <svg key="7" width="20" height="16" viewBox="0 0 20 16">
    <circle cx="10" cy="8" r="6.5" fill="none" stroke="#5a2a8a" strokeWidth="3" />
    <circle cx="10" cy="8" r="2" fill="#5a2a8a" />
    <path d="M0 8h6M14 8h6" stroke="#535353" strokeWidth="1.5" />
  </svg>,
  <svg key="8" width="16" height="10" viewBox="0 0 16 10">
    <path d="M0 2l4 1 1-2 3 2 3-2 1 2 4-1-2 4-2 0-4 4-4-4H2z" fill="#fff" />
  </svg>,
  <svg key="9" width="16" height="16" viewBox="0 0 16 16">
    <rect width="16" height="16" rx="2" fill="#000" />
    <path d="M3 3h10L9 6H4zM4 7h7l-3 2H6l2 4-3-2z" fill="#14e0a0" />
  </svg>,
  <svg key="10" width="16" height="16" viewBox="0 0 16 16">
    <circle cx="8" cy="8" r="6" fill="none" stroke="#ef3a3a" strokeWidth="3" strokeDasharray="9.4 28" transform="rotate(150 8 8)" />
    <circle cx="8" cy="8" r="6" fill="none" stroke="#f8c218" strokeWidth="3" strokeDasharray="9.4 28" transform="rotate(60 8 8)" />
    <circle cx="8" cy="8" r="6" fill="none" stroke="#32b04a" strokeWidth="3" strokeDasharray="9.4 28" transform="rotate(-30 8 8)" />
    <circle cx="8" cy="8" r="6" fill="none" stroke="#2a70e0" strokeWidth="3" strokeDasharray="9.4 28" transform="rotate(-120 8 8)" />
  </svg>,
  <svg key="11" width="13" height="15" viewBox="0 0 13 15">
    <path d="M3 1c3-2 9-1 9 5 0 5-1 8-3 8-1 0-2-1-1-3-3 1-7 0-8-4 0-3 2-4 3-6z" fill="#f0f0f0" />
  </svg>,
  <svg key="12" width="16" height="16" viewBox="0 0 16 16">
    <rect width="16" height="16" rx="1" fill="#e06a12" />
    <path d="M3 11h10M4 13h8M8 3c2 2-2 3 0 6" stroke="#fff" fill="none" />
  </svg>,
  <svg key="13" width="16" height="15" viewBox="0 0 16 15">
    <rect width="8" height="9" fill="#8a3a90" />
    <path d="M10 2l4 8M14 2l-4 8" stroke="#fff" />
    <circle cx="9" cy="12" r="2" fill="none" stroke="#fff" />
    <circle cx="14" cy="12" r="2" fill="none" stroke="#fff" />
    <text x="1" y="8" fontSize="7" fill="#fff" fontFamily="Liberation Sans" fontWeight="700">
      N
    </text>
  </svg>,
  <svg key="14" width="14" height="16" viewBox="0 0 14 16">
    <path d="M5 4v9l2-2 2 4 1-1-2-4h3z" fill="#333" stroke="#fff" />
    <path d="M2 1l1 2M0 5h2M5 0v2" stroke="#fff" />
  </svg>,
  <svg key="15" width="16" height="14" viewBox="0 0 16 14">
    <path d="M5 0h5l6 7-6 7H0l6-7z" fill="#2f7fe0" />
    <path d="M10 0l6 7-6 7H7l5-7z" fill="#79b4f0" />
  </svg>,
  <svg key="16" width="14" height="18" viewBox="0 0 14 18">
    <rect x="1" y="3" width="11" height="9" fill="#fff" stroke="#000" />
    <rect x="3" y="5" width="7" height="5" fill="#0a0ae0" />
    <path d="M0 15h14v2H0zM6 0h2v3H6z" fill="#fff" stroke="#000" strokeWidth=".6" />
  </svg>,
];

function TrayPopup() {
  return (
    <div className="absolute z-20 right-0 top-[883px] w-[150px] h-[157px] bg-[#535353] shadow-[-4px_-2px_8px_rgba(0,0,0,0.25)] overflow-hidden grid grid-cols-[repeat(4,40px)] auto-rows-[40px] pt-px">
      {tray.map((node, i) => (
        <div key={i} className={`flex items-center justify-center ${i === 9 ? "bg-[#646464]" : ""}`}>
          {node}
        </div>
      ))}
    </div>
  );
}

const grad = (id: string, a: string, b: string) => (
  <linearGradient id={id} x1="0" y1="0" x2="0" y2="1" key={id}>
    <stop offset="0" stopColor={a} />
    <stop offset="1" stopColor={b} />
  </linearGradient>
);

export default function App() {
  return (
    <div className="relative w-[1532px] h-[1040px] overflow-hidden bg-[#f0f0f0] flex flex-col text-[11.5px] leading-[16px] font-['Noto_Sans',sans-serif] border-t border-[#8a8a8a]">
      <svg width="0" height="0" className="absolute">
        <defs>
          {grad("gBlue", "#c8ddf0", "#7fa8d0")}
          {grad("gBlue2", "#c4d8fa", "#86aaee")}
          {grad("gGrey", "#f6f6f6", "#c0c0c0")}
          {grad("gLight", "#efefef", "#c8c8c8")}
          {grad("gDark", "#dcdcdc", "#909090")}
          {grad("gOlive", "#b6c800", "#6a8a00")}
          {grad("gCream", "#fffdf0", "#f0dc90")}
          {grad("gFolder", "#f8dc80", "#c89838")}
          {grad("gGreen", "#a0f080", "#20c020")}
          {grad("gBlack", "#000", "#555")}
          {grad("gDial", "#fafafa", "#d4d4d4")}
        </defs>
      </svg>

      <header className="h-[29px] shrink-0 bg-white flex items-center text-[#9a9a9a]">
        <span className="ml-[10px] mr-[6px] flex">
          <QtLogo />
        </span>
        <span className="flex-1">Qt Designer</span>
        <div className="flex pr-px">
          <span className="w-[46px] h-[29px] flex items-center justify-center">
            <svg width="10" height="10" viewBox="0 0 10 10">
              <path d="M0 5.5h10" stroke="#8a8a8a" />
            </svg>
          </span>
          <span className="w-[46px] h-[29px] flex items-center justify-center">
            <svg width="10" height="10" viewBox="0 0 10 10">
              <rect x=".5" y=".5" width="9" height="9" fill="none" stroke="#8a8a8a" />
            </svg>
          </span>
          <span className="w-[46px] h-[29px] flex items-center justify-center">
            <svg width="11" height="11" viewBox="0 0 11 11">
              <path d="M.5.5l10 10M10.5.5l-10 10" stroke="#8a8a8a" />
            </svg>
          </span>
        </div>
      </header>

      <nav className="h-[22px] shrink-0 bg-white flex items-center gap-[15px] pl-[10px] pt-[2px] text-[#9a9a9a]">
        {["File", "Edit", "Form", "View", "Settings", "Window", "Help"].map((m) => (
          <span key={m}>{m}</span>
        ))}
      </nav>

      <Toolbar />

      <main className="flex-1 flex min-h-0">
        <WidgetBox />
        <div className="ml-[2px] w-[755px] shrink-0 bg-[#a0a0a0] border border-[#828282] h-[934px]">
          <FormWindow />
        </div>
        <div className="ml-[4px] w-[512px] shrink-0 flex flex-col">
          <ObjectInspector />
          <PropertyEditor />
          <ActionEditor />
        </div>
      </main>

      <footer className="h-[21px] shrink-0 bg-[#f0f0f0] border-t border-[#c8c8c8]" />

      <TrayPopup />

      <Badge n={1} className="left-[815px] top-[143px]" />
      <Badge n={2} className="left-[105px] top-[79px]" />
      <Badge n={3} className="left-[1310px] top-[79px]" />
      <Badge n={4} className="left-[1317px] top-[262px]" />
      <Badge n={5} className="left-[1343px] top-[755px]" />
      <Badge n={6} className="left-[586px] top-[49px]" />
      <Badge n={7} className="left-[104px] top-[1px]" />
    </div>
  );
}
